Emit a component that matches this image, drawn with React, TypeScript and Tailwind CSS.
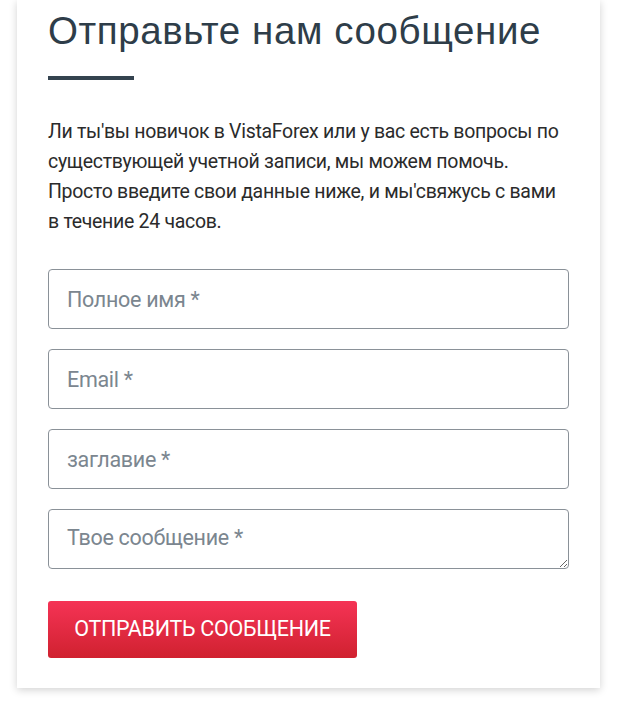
export default function App() {
    const fields = ['Полное имя *', 'Email *', 'заглавие *'];
    return (
        <div className="min-h-[705px] bg-white px-[17px] pr-[23px]" style={{ fontFamily: 'Roboto, "Liberation Sans", sans-serif' }}>
            <div className="bg-white shadow-[0_2px_8px_rgba(0,0,0,0.18)] px-[31px] pb-[30px] pt-[8px]">
                <h2 className="text-[38.5px] leading-[46px] text-[#2e3d49] font-normal tracking-[0.6px] font-['Liberation_Sans',Arial,sans-serif]">
                    Отправьте нам сообщение
                </h2>
                <div className="mt-[22px] h-[4px] w-[86px] bg-[#34434f]" />

                <p className="mt-[37px] text-[19.5px] leading-[30px] text-[#2b2b2b] tracking-[-0.3px] whitespace-nowrap">
                    Ли ты'вы новичок в VistaForex или у вас есть вопросы по
                    <br />
                    существующей учетной записи, мы можем помочь.
                    <br />
                    Просто введите свои данные ниже, и мы'свяжусь с вами
                    <br />
                    в течение 24 часов.
                </p>

                <form className="mt-[32px] flex flex-col gap-[20px] w-[521px]">
                    {fields.map((f) => (
                        <input
                            key={f}
                            type="text"
                            placeholder={f}
                            className="h-[60px] w-full rounded-[4px] border border-[#8a9198] px-[18px] text-[21.5px] text-[#333] placeholder:text-[#7b868f] bg-white outline-none tracking-[-0.3px]"
                        />
                    ))}
                    <textarea
                        placeholder="Твое сообщение *"
                        className="h-[60px] w-full rounded-[4px] border border-[#8a9198] px-[18px] pt-[12px] text-[21.5px] text-[#333] placeholder:text-[#7b868f] bg-white outline-none tracking-[-0.3px]"
                    />
                    <div className="pt-[12px]">
                        <button
                            type="button"
                            className="h-[57px] w-[309px] rounded-[3px] bg-gradient-to-b from-[#f53355] to-[#d0212f] text-white text-[21.5px] uppercase tracking-[-0.3px]"
                        >
                            Отправить сообщение
                        </button>
                    </div>
                </form>
            </div>
        </div>
    );
}
